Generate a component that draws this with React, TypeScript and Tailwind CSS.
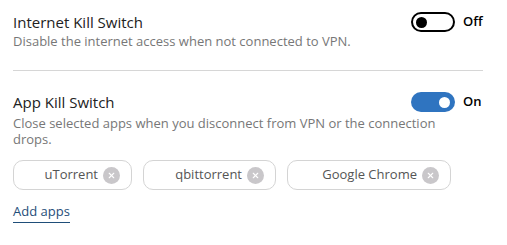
import { X } from "lucide-react";

const APPS = [
  { name: "uTorrent", w: "w-[119px]" },
  { name: "qbittorrent", w: "w-[133px]" },
  { name: "Google Chrome", w: "w-[164px]" },
];

function Toggle({ on }: { on: boolean }) {
  return (
    <div className="flex items-center gap-2">
      {on ? (
        <div className="flex h-[20px] w-[44px] items-center justify-end rounded-full bg-[#2f74c0] pr-[5px]">
          <div className="h-[11px] w-[11px] rounded-full bg-white" />
        </div>
      ) : (
        <div className="flex h-[20px] w-[44px] items-center rounded-full border-2 border-black pl-[3px]">
          <div className="h-[11px] w-[11px] rounded-full bg-black" />
        </div>
      )}
      <span className="w-[20px] text-[13px] font-semibold text-black">{on ? "On" : "Off"}</span>
    </div>
  );
}

export default function App() {
  return (
    <div
      className="h-[245px] w-[507px] bg-white pl-[13px] pr-[24px] pt-[11px]"
      style={{ fontFamily: '"Open Sans", "Noto Sans", sans-serif' }}
    >
      {/* Internet kill switch */}
      <div className="flex items-start justify-between">
        <div className="text-[15px] leading-[22px] text-[#222]">Internet Kill Switch</div>
        <div className="pt-[1px]">
          <Toggle on={false} />
        </div>
      </div>
      <div className="text-[13px] leading-[16px] text-[#777]">
        Disable the internet access when not connected to VPN.
      </div>

      <div className="mt-[21px] h-px bg-[#d6d6d6]" />

      {/* App kill switch */}
      <div className="mt-[20px] flex items-start justify-between">
        <div className="text-[15px] leading-[22px] text-[#222]">App Kill Switch</div>
        <div className="pt-[1px]">
          <Toggle on={true} />
        </div>
      </div>
      <div className="mt-[2px] max-w-[445px] text-[13px] leading-[16px] text-[#777]">
        Close selected apps when you disconnect from VPN or the connection drops.
      </div>

      <div className="mt-[13px] flex gap-[11px]">
        {APPS.map((a) => (
          <div
            key={a.name}
            className={`flex h-[30px] ${a.w} items-center justify-end gap-[5px] rounded-[10px] border border-[#d4d4d4] pr-[11px]`}
          >
            <span className="text-[13px] text-[#555]">{a.name}</span>
            <span className="flex h-[17px] w-[17px] items-center justify-center rounded-full bg-[#c9c7ca]">
              <X className="h-[9px] w-[9px] text-white" strokeWidth={3} />
            </span>
          </div>
        ))}
      </div>

      <div className="mt-[8px]">
        <span className="border-b border-[#1f4e79] pb-[2px] text-[13px] text-[#1f4e79]">Add apps</span>
      </div>
    </div>
  );
}
